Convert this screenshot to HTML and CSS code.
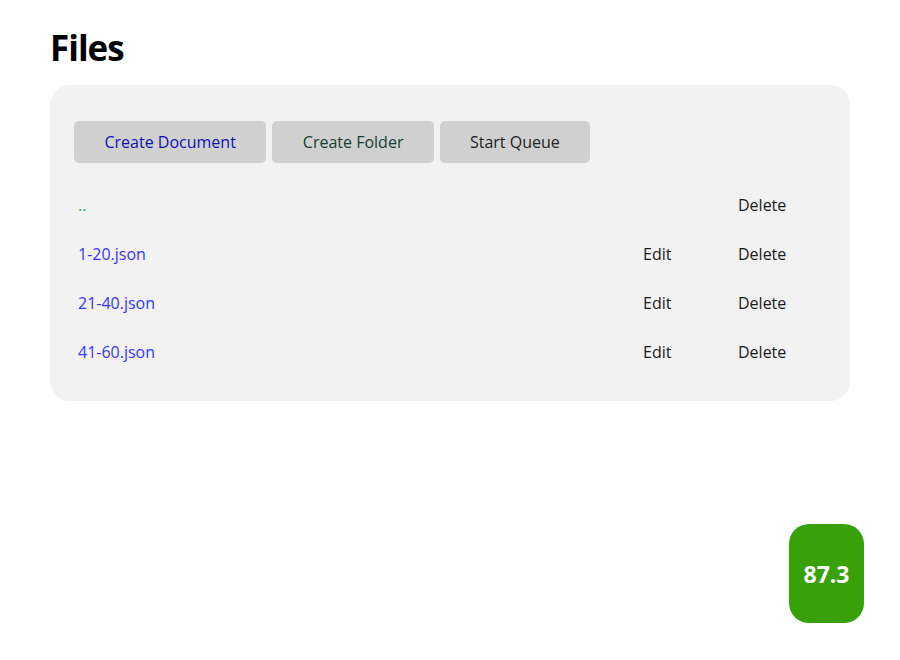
FILE: index.html
```html
<!DOCTYPE html>
<html>
<head>
<meta charset="utf-8">
<link rel="stylesheet" href="styles.css">
</head>
<body>
<main class="page">
  <h1 class="title">Files</h1>
  <section class="card">
    <div class="toolbar">
      <button class="btn btn-doc">Create Document</button>
      <button class="btn btn-folder">Create Folder</button>
      <button class="btn btn-queue">Start Queue</button>
    </div>
    <div class="files">
      <div class="row">
        <a class="name up">..</a>
        <span class="action"></span>
        <span class="action">Delete</span>
      </div>
      <div class="row">
        <a class="name">1-20.json</a>
        <span class="action">Edit</span>
        <span class="action">Delete</span>
      </div>
      <div class="row">
        <a class="name">21-40.json</a>
        <span class="action">Edit</span>
        <span class="action">Delete</span>
      </div>
      <div class="row">
        <a class="name">41-60.json</a>
        <span class="action">Edit</span>
        <span class="action">Delete</span>
      </div>
    </div>
  </section>
</main>
<div class="score">87.3</div>
</body>
</html>
```
FILE: styles.css
```css
html, body {
  margin: 0;
  padding: 0;
  background: #ffffff;
  font-family: "Open Sans", "Noto Sans", sans-serif;
  color: #1a1a1a;
}
.page {
  padding: 24px 50px 0 50px;
}
.title {
  margin: 0 0 13px 0;
  font-size: 35px;
  font-weight: 700;
  line-height: 48px;
  color: #000;
  letter-spacing: -1px;
}
.card {
  background: #f2f2f2;
  border-radius: 20px;
  padding: 36px 24px 25px 24px;
}
.toolbar {
  display: flex;
  gap: 6px;
  margin-bottom: 17px;
}
.btn {
  font-family: inherit;
  font-size: 16px;
  height: 42px;
  border: none;
  border-radius: 5px;
  background: #d0d0d0;
  padding: 0 30px;
}
.btn-doc { color: #1010b0; padding: 0 30.5px; }
.btn-folder { color: #154030; padding: 0 30.5px; }
.btn-queue { color: #222; }
.files {
  display: flex;
  flex-direction: column;
}
.row {
  display: grid;
  grid-template-columns: 1fr 95px 88px;
  height: 49px;
  align-items: center;
  padding-left: 4px;
  font-size: 16px;
}
.name {
  color: #3535ff;
  text-decoration: none;
}
.name.up {
  color: #22b050;
}
.action {
  color: #1a1a1a;
}
.score {
  position: absolute;
  left: 789px;
  top: 524px;
  width: 75px;
  height: 99px;
  border-radius: 20px;
  background: #38a10a;
  color: #fff;
  font-size: 23px;
  font-weight: 700;
  display: flex;
  align-items: center;
  justify-content: center;
}
```
